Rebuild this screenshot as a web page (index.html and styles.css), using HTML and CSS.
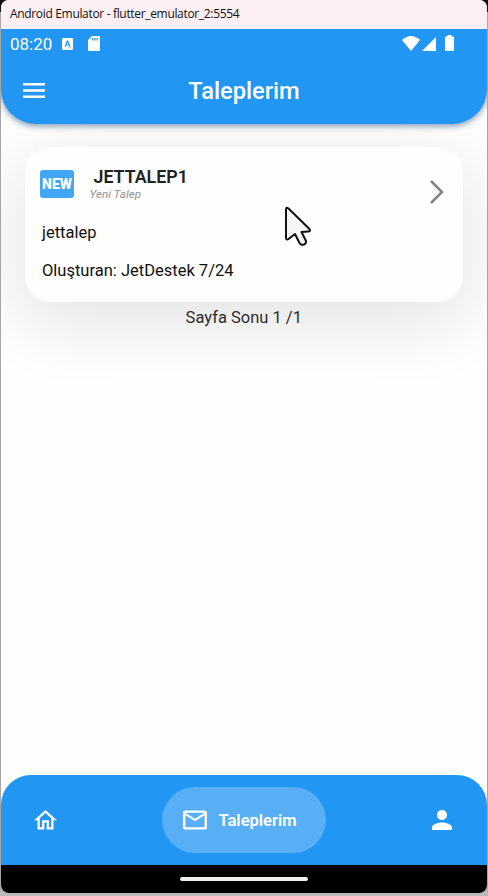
FILE: index.html
```html
<!DOCTYPE html>
<html lang="tr">
<head>
<meta charset="utf-8">
<title>Android Emulator</title>
<link rel="stylesheet" href="styles.css">
</head>
<body>
<div class="window">
  <div class="titlebar"><span class="window-name">Android Emulator - flutter_emulator_2:5554</span></div>
  <div class="screen">
    <header class="header">
      <div class="status">
        <span class="clock">08:20</span>
        <svg class="ic-lang" viewBox="0 0 11 12"><path fill="#fff" fill-rule="evenodd" d="M1 0h9q1 0 1 1v10q0 1-1 1H1q-1 0-1-1V1q0-1 1-1zM4.800 2.500 2.600 8.800h1.300l.4-1.300h2.400l.4 1.300h1.300L6.200 2.500zM4.700 6.400l.8-2.500.8 2.500zM6 9.500v.8h1v-.8zm2 0v.8h1v-.8z"/></svg>
        <svg class="ic-sd" viewBox="0 0 12 15"><path fill="#fff" fill-rule="evenodd" d="M4 0h7q1 0 1 1v13q0 1-1 1H1q-1 0-1-1V4zM4 2v2.500h1.300V2zm2.300 0v2.500h1.300V2zm2.300 0v2.500h1.300V2z"/></svg>
        <span class="spacer"></span>
        <svg class="ic-wifi" viewBox="0 0 18 15"><path fill="#fff" d="M0 4Q9-4 18 4L9 15z"/></svg>
        <svg class="ic-signal" viewBox="0 0 14 14"><path fill="#fff" d="M14 0v14H0z"/></svg>
        <svg class="ic-battery" viewBox="0 0 9 16"><path fill="#fff" d="M2.500 0h4v1.500H8q1 0 1 1V15q0 1-1 1H1q-1 0-1-1V2.500q0-1 1-1h1.500z"/></svg>
      </div>
      <div class="appbar">
        <svg class="ic-menu" viewBox="0 0 22 15"><path fill="#fff" d="M0 0h22v2.400H0zm0 6.300h22v2.400H0zm0 6.300h22V15H0z"/></svg>
        <h1 class="title">Taleplerim</h1>
      </div>
    </header>
    <main class="content">
      <article class="card">
        <div class="card-head">
          <span class="badge"><span class="badge-text">NEW</span></span>
          <div class="names">
            <div class="code">JETTALEP1</div>
            <div class="state">Yeni Talep</div>
          </div>
          <svg class="ic-chevron" viewBox="0 0 14 24"><path fill="none" stroke="#858585" stroke-width="2.600" d="m1 1 11 11L1 23"/></svg>
        </div>
        <p class="subject">jettalep</p>
        <p class="creator">Oluşturan: JetDestek 7/24</p>
        <svg class="cursor" viewBox="0 0 28 42"><path fill="#f5f5f6" stroke="#111" stroke-width="2" stroke-linejoin="round" d="M2 3.500Q2 .5 4.500 2.500L25.500 23Q27 25.500 24 25.500L17.500 26 22 35Q22.500 37.500 20 38.500 17 39.500 15.500 37L11 28 4.500 33Q2 34.500 2 31.500z"/></svg>
      </article>
      <p class="page-end">Sayfa Sonu 1 /1</p>
    </main>
    <nav class="nav">
      <svg class="ic-home" viewBox="2 3 20 17.500"><path fill="#fff" d="m12 5.690 5 4.500V18h-2v-6H9v6H7v-7.810l5-4.500M12 3 2 12h3v8h6v-6h2v6h6v-8h3L12 3z"/></svg>
      <div class="pill">
        <svg class="ic-mail" viewBox="2 4 20 16"><path fill="#fff" d="M20 4H4c-1.100 0-2 .9-2 2v12c0 1.100.9 2 2 2h16c1.100 0 2-.9 2-2V6c0-1.100-.9-2-2-2zm0 14H4V8l8 5 8-5v10zm-8-7L4 6h16l-8 5z"/></svg>
        <span class="pill-text">Taleplerim</span>
      </div>
      <svg class="ic-person" viewBox="4 4 16 16"><path fill="#fff" d="M12 12c2.210 0 4-1.790 4-4s-1.790-4-4-4-4 1.790-4 4 1.790 4 4 4zm0 2c-2.670 0-8 1.340-8 4v2h16v-2c0-2.660-5.330-4-8-4z"/></svg>
    </nav>
    <div class="gesture"><span class="handle"></span></div>
  </div>
</div>
</body>
</html>
```
FILE: styles.css
```css
* { box-sizing: border-box; }
body {
  margin: 0;
  height: 896px;
  overflow: hidden;
  background: linear-gradient(#111 0 12px, #a6a6a6 12px 885px, #bababa 893px);
  font-family: Roboto, "Liberation Sans", sans-serif;
}
p, h1 { margin: 0; font-weight: 400; }
svg { display: block; flex: none; }
.window {
  width: 486px;
  height: 893px;
  margin: 0 1px;
  display: flex;
  flex-direction: column;
  border-radius: 8px;
  overflow: hidden;
  background: #fefefc;
}
.titlebar {
  position: relative;
  z-index: 2;
  flex: 0 0 29px;
  padding-left: 9px;
  background: #fbeff3;
  color: #111;
  font: 12px/28px "Open Sans", sans-serif;
  white-space: nowrap;
}
.window-name { letter-spacing: -0.33px; }
.screen { flex: 1; display: flex; flex-direction: column; }
.header {
  position: relative;
  z-index: 1;
  height: 95px;
  background: #2196f3;
  border-radius: 0 0 35px 35px;
  box-shadow: 0 2px 6px rgba(20, 70, 120, .55);
  color: #fff;
}
.status { display: flex; align-items: center; height: 29px; padding: 0 33px 0 9px; }
.clock { width: 52px; padding-top: 1px; font-size: 17px; line-height: 29px; }
.spacer { flex: 1; }
.ic-lang { width: 11px; height: 12px; }
.ic-sd { width: 12px; height: 15px; margin-left: 15px; }
.ic-wifi { width: 18px; height: 15px; margin: 0 2px 1px 0; }
.ic-signal { width: 14px; height: 14px; margin-right: 9px; }
.ic-battery { width: 9px; height: 16px; margin-bottom: 1px; }
.appbar { display: grid; grid-template-columns: 60px 1fr 60px; align-items: center; height: 65px; }
.ic-menu { width: 22px; height: 15px; margin: 0 0 1px 22px; }
.title { padding-top: 1px; text-align: center; font-size: 23.700px; font-weight: 500; line-height: 30px; }
.content { flex: 1; padding: 23px 24px 0 23.500px; }
.card {
  position: relative;
  height: 155px;
  padding: 19px 19px 0 15.500px;
  border-radius: 25px;
  background: #fefefc;
  box-shadow: 0 18px 66px 4px rgba(30, 30, 50, .115);
}
.card-head { display: flex; height: 52px; }
.badge {
  width: 34px;
  height: 28px;
  margin-top: 4px;
  border-radius: 3px;
  background: #42a5f5;
  display: flex;
  justify-content: center;
}
.badge-text { color: #fff; font: 900 14px/29px Roboto, sans-serif; }
.names { flex: 1; padding-left: 15.500px; }
.code { padding-left: 4px; font-size: 17.800px; font-weight: 600; line-height: 22px; color: #222; }
.state { font-size: 11.700px; font-style: italic; line-height: 13px; color: #929292; }
.ic-chevron { width: 14px; height: 24px; margin-top: 14px; }
.subject, .creator { padding-left: 2px; font-size: 16.500px; line-height: 38px; height: 38px; color: #111; margin-top: -4px; }
.creator { margin-top: 0; }
.cursor { position: absolute; left: 259px; top: 59px; width: 28px; height: 42px; }
.page-end { position: relative; padding-top: 1px; text-align: center; font-size: 16.500px; line-height: 30px; color: #2c2c2c; }
.nav {
  flex: 0 0 90px;
  display: flex;
  align-items: center;
  justify-content: space-between;
  padding: 0 35px 0 33px;
  border-radius: 30px 30px 0 0;
  background: #2196f3;
  color: #fff;
}
.ic-home { width: 23px; height: 20px; }
.pill {
  display: flex;
  align-items: center;
  width: 164px;
  height: 66px;
  margin-right: 2px;
  padding-left: 21px;
  gap: 12px;
  border-radius: 33px;
  background: #58aff6;
}
.ic-mail { width: 24px; height: 20px; }
.pill-text { padding-top: 1px; font-size: 16.500px; font-weight: 600; line-height: 24px; }
.ic-person { width: 20px; height: 20px; }
.gesture { flex: 0 0 28px; display: flex; align-items: center; justify-content: center; background: #000; }
.handle { width: 128px; height: 4px; border-radius: 2px; background: #eee; }
```
